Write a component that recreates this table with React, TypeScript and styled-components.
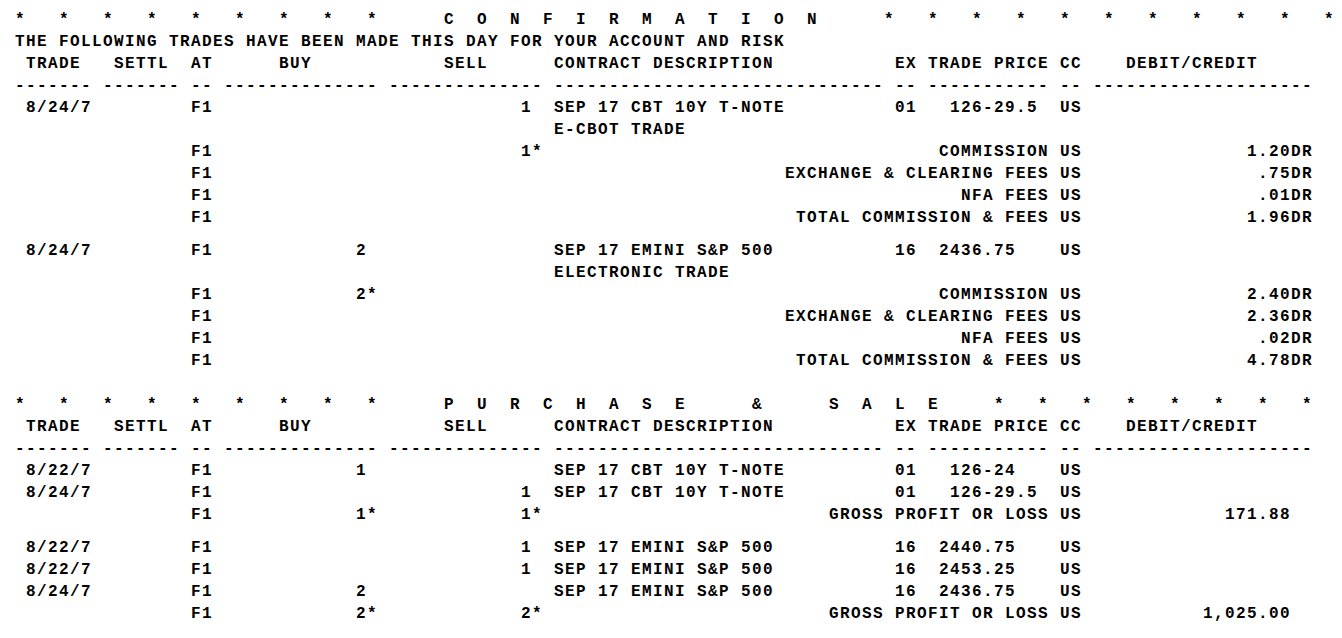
import styled, { createGlobalStyle } from "styled-components";

type Align = "l" | "r";
type Cell = [number, string, Align?];
type Row = Cell[];

const COLS = 120;

// header + rule lines are shared by both sections
const headerRow: Row = [
  [1, "TRADE"],
  [9, "SETTL"],
  [16, "AT"],
  [24, "BUY"],
  [39, "SELL"],
  [49, "CONTRACT DESCRIPTION"],
  [80, "EX"],
  [83, "TRADE PRICE"],
  [95, "CC"],
  [101, "DEBIT/CREDIT"],
];

const ruleRow: Row = [
  [0, "-------"],
  [8, "-------"],
  [16, "--"],
  [19, "--------------"],
  [34, "--------------"],
  [49, "------------------------------"],
  [80, "--"],
  [83, "-----------"],
  [95, "--"],
  [98, "--------------------"],
];

function banner(word: Cell[], right: number[]): Row {
  const left: Cell[] = [0, 4, 8, 12, 16, 20, 24, 28, 32].map((c) => [c, "*"]);
  return [...left, ...word, ...right.map((c) => [c, "*"] as Cell)];
}

const confirmBanner = banner(
  "CONFIRMATION".split("").map((ch, i) => [39 + i * 3, ch] as Cell),
  [79, 83, 87, 91, 95, 99, 103, 107, 111, 115, 119]
);

const saleBanner = banner(
  [
    ..."PURCHASE".split("").map((ch, i) => [39 + i * 3, ch] as Cell),
    [67, "&"] as Cell,
    ..."SALE".split("").map((ch, i) => [74 + i * 3, ch] as Cell),
  ],
  [89, 93, 97, 101, 105, 109, 113, 117]
);

const fee = (label: string, amount: string, qty?: Cell): Row => [
  [16, "F1"],
  ...(qty ? [qty] : []),
  [93, label, "r"],
  [95, "US"],
  [117, amount, "r"],
];

const confirmGroups: Row[][] = [
  [
    [[1, "8/24/7"], [16, "F1"], [46, "1"], [49, "SEP 17 CBT 10Y T-NOTE"], [80, "01"], [85, "126-29.5"], [95, "US"]],
    [[49, "E-CBOT TRADE"]],
    fee("COMMISSION", "1.20DR", [46, "1*"]),
    fee("EXCHANGE & CLEARING FEES", ".75DR"),
    fee("NFA FEES", ".01DR"),
    fee("TOTAL COMMISSION & FEES", "1.96DR"),
  ],
  [
    [[1, "8/24/7"], [16, "F1"], [31, "2"], [49, "SEP 17 EMINI S&P 500"], [80, "16"], [84, "2436.75"], [95, "US"]],
    [[49, "ELECTRONIC TRADE"]],
    fee("COMMISSION", "2.40DR", [31, "2*"]),
    fee("EXCHANGE & CLEARING FEES", "2.36DR"),
    fee("NFA FEES", ".02DR"),
    fee("TOTAL COMMISSION & FEES", "4.78DR"),
  ],
];

const gross = (buy: string, sell: string, amount: string): Row => [
  [16, "F1"],
  [31, buy],
  [46, sell],
  [93, "GROSS PROFIT OR LOSS", "r"],
  [95, "US"],
  [115, amount, "r"],
];

const saleGroups: Row[][] = [
  [
    [[1, "8/22/7"], [16, "F1"], [31, "1"], [49, "SEP 17 CBT 10Y T-NOTE"], [80, "01"], [85, "126-24"], [95, "US"]],
    [[1, "8/24/7"], [16, "F1"], [46, "1"], [49, "SEP 17 CBT 10Y T-NOTE"], [80, "01"], [85, "126-29.5"], [95, "US"]],
    gross("1*", "1*", "171.88"),
  ],
  [
    [[1, "8/22/7"], [16, "F1"], [46, "1"], [49, "SEP 17 EMINI S&P 500"], [80, "16"], [84, "2440.75"], [95, "US"]],
    [[1, "8/22/7"], [16, "F1"], [46, "1"], [49, "SEP 17 EMINI S&P 500"], [80, "16"], [84, "2453.25"], [95, "US"]],
    [[1, "8/24/7"], [16, "F1"], [31, "2"], [49, "SEP 17 EMINI S&P 500"], [80, "16"], [84, "2436.75"], [95, "US"]],
    gross("2*", "2*", "1,025.00"),
  ],
];

function Line({ cells }: { cells: Row }) {
  return (
    <Grid>
      {cells.map(([col, text, align], i) => {
        const start = align === "r" ? col - text.length + 1 : col;
        return (
          <Field key={i} $start={start} $span={text.length} $align={align === "r" ? "right" : "left"}>
            {text}
          </Field>
        );
      })}
    </Grid>
  );
}

function Section({ head, title, groups }: { head: Row; title?: string; groups: Row[][] }) {
  return (
    <Block>
      <Line cells={head} />
      {title && <Line cells={[[0, title]]} />}
      <Line cells={headerRow} />
      <Line cells={ruleRow} />
      {groups.map((rows, g) => (
        <Group key={g}>
          {rows.map((r, i) => (
            <Line key={i} cells={r} />
          ))}
        </Group>
      ))}
    </Block>
  );
}

export default function App() {
  return (
    <>
      <GlobalStyle />
      <Sheet>
        <Section
          head={confirmBanner}
          title="THE FOLLOWING TRADES HAVE BEEN MADE THIS DAY FOR YOUR ACCOUNT AND RISK"
          groups={confirmGroups}
        />
        <Section head={saleBanner} groups={saleGroups} />
      </Sheet>
    </>
  );
}

const GlobalStyle = createGlobalStyle`
  html, body {
    margin: 0;
    background: #ffffff;
  }
`;

const Sheet = styled.div`
  padding: 9px 0 0 15px;
  display: flex;
  flex-direction: column;
  gap: 22px;
  color: #000000;
  font-family: "Liberation Mono", "DejaVu Sans Mono", monospace;
  font-weight: 700;
  font-size: 16px;
  letter-spacing: 1.4px;
`;

const Block = styled.section`
  display: flex;
  flex-direction: column;
`;

const Group = styled.div`
  display: flex;
  flex-direction: column;

  & + & {
    margin-top: 11px;
  }
`;

const Grid = styled.div`
  display: grid;
  grid-template-columns: repeat(${COLS}, 11px);
  height: 22px;
  line-height: 22px;
`;

const Field = styled.span<{ $start: number; $span: number; $align: "left" | "right" }>`
  grid-row: 1;
  grid-column: ${({ $start }) => $start + 1} / span ${({ $span }) => $span};
  white-space: pre;
  text-align: ${({ $align }) => $align};
`;
